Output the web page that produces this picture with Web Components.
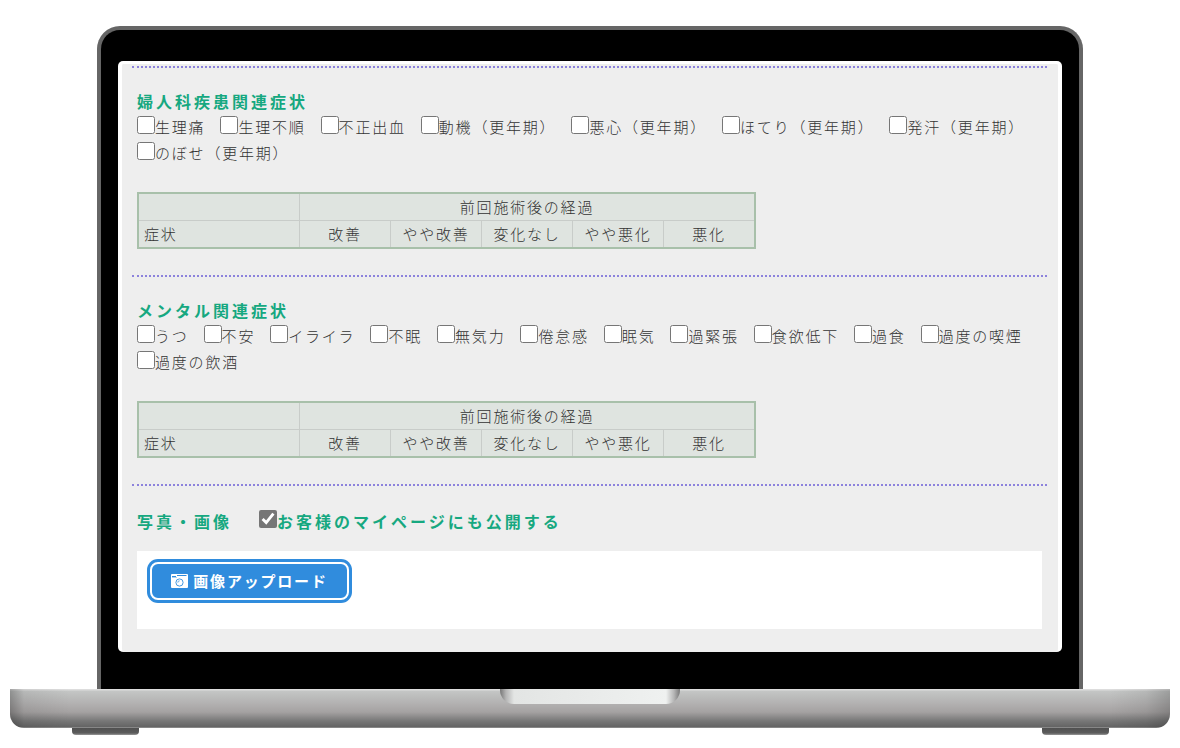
<!DOCTYPE html>
<html lang="ja">
<head>
<meta charset="utf-8">
<title>カルテ入力</title>
<style>
body { margin: 0; background: #fff; color: #333; font: 300 15px/26px "Noto Sans CJK JP", sans-serif; letter-spacing: .12em; }
</style>
</head>
<body>
<laptop-frame>
  <symptom-section heading="婦人科疾患関連症状" items="生理痛,生理不順,不正出血,動機（更年期）,悪心（更年期）,ほてり（更年期）,発汗（更年期）,のぼせ（更年期）"></symptom-section>
  <symptom-section heading="メンタル関連症状" items="うつ,不安,イライラ,不眠,無気力,倦怠感,眠気,過緊張,食欲低下,過食,過度の喫煙,過度の飲酒"></symptom-section>
  <photo-section></photo-section>
</laptop-frame>
<script>
class LaptopFrame extends HTMLElement {
  connectedCallback() {
    this.attachShadow({ mode: 'open' }).innerHTML = `
    <style>
      :host { display: block; padding: 26px 10px 13px; }
      .lid { margin: 0 7.5%; padding: 31px 17px 37px; border: 4px solid #666; border-bottom: 0; border-radius: 23px 23px 0 0; background: #000; }
      .screen { background: #eee; border: 4px solid #fff; border-top-width: 3px; border-bottom: 0; border-radius: 5px; padding: 2px 11px 23px 10px; }
      .base { position: relative; height: 39px; border-radius: 0 0 14px 14px;
        background: linear-gradient(90deg, #0004, #0001 14px, #0000 60px, #0000 calc(100% - 60px), #0001 calc(100% - 24px), #0003),
          linear-gradient(#ddd 0 1px, #c4c6c5 2px, #b3b2b2 14px, #a5a2a2 23px, #777 32px, #646464 38px, #aaa 39px); }
      .notch { width: 180px; height: 15px; margin: 0 auto; border-radius: 0 0 14px 14px;
        background: linear-gradient(90deg, #777, #b5b5b5 6px, #e3e5e4 14px, #eff1f0 calc(100% - 14px), #b5b5b5 calc(100% - 6px), #777); }
      .feet { display: flex; justify-content: space-between; padding: 0 61px 0 62px; }
      .feet i { width: 67px; height: 7px; background: linear-gradient(#505050, #5c5c5c 5px, #999); border-radius: 0 0 4px 4px; }
    </style>
    <div class="lid"><main class="screen"><slot></slot></main></div>
    <div class="base"><div class="notch"></div></div>
    <div class="feet"><i></i><i></i></div>`;
  }
}
class CheckItem extends HTMLElement {
  connectedCallback() {
    this.attachShadow({ mode: 'open' }).innerHTML = `
    <style>
      :host { display: block; }
      label { display: flex; align-items: flex-start; white-space: nowrap; }
      input { width: 18px; height: 18px; margin: 2px 0 0; accent-color: #767676; }
    </style>
    <label><input type="checkbox" ${this.hasAttribute('checked') ? 'checked' : ''}><slot></slot></label>`;
  }
}
class ProgressTable extends HTMLElement {
  connectedCallback() {
    this.attachShadow({ mode: 'open' }).innerHTML = `
    <style>
      :host { display: block; }
      table { table-layout: fixed; width: 619px; border: 2px solid #a8c0aa; border-spacing: 0; background: #dfe4e0; }
      th { box-sizing: border-box; height: 26px; padding: 0; font-weight: inherit; border-right: 1px solid #c8ccc9; }
      thead tr:first-child th { height: 27px; border-bottom: 1px solid #c8ccc9; }
      tr th:last-child { border-right: 0; }
      .name { text-align: left; padding-left: 5px; }
      col { width: 91px; }
      col:first-child { width: 161px; }
      col:last-child { width: 90px; }
    </style>
    <table>
      <colgroup><col><col><col><col><col><col></colgroup>
      <thead>
        <tr><th></th><th colspan="5">前回施術後の経過</th></tr>
        <tr><th class="name">症状</th><th>改善</th><th>やや改善</th><th>変化なし</th><th>やや悪化</th><th>悪化</th></tr>
      </thead>
    </table>`;
  }
}
class SymptomSection extends HTMLElement {
  connectedCallback() {
    const items = this.getAttribute('items').split(',');
    this.attachShadow({ mode: 'open' }).innerHTML = `
    <style>
      :host { display: block; border-top: 2px dotted #8c82dc; padding: 20px 5px 26px; }
      h2 { margin: 0; font-size: 16px; line-height: 26px; font-weight: 700; letter-spacing: 3px; color: #16a880; }
      .items { display: flex; flex-wrap: wrap; column-gap: 15px; margin-bottom: 26px; }
    </style>
    <h2>${this.getAttribute('heading')}</h2>
    <div class="items">${items.map(t => `<check-item>${t}</check-item>`).join('')}</div>
    <progress-table></progress-table>`;
  }
}
class UploadButton extends HTMLElement {
  connectedCallback() {
    this.attachShadow({ mode: 'open' }).innerHTML = `
    <style>
      :host { display: block; }
      button { display: flex; align-items: center; justify-content: center; gap: 5px; width: 199px; height: 38px; padding: 0;
        border: 2px solid #fff; border-radius: 8px; box-shadow: 0 0 0 3px #308cdd; background: #308cdd;
        color: #fff; font: inherit; font-weight: 700; letter-spacing: inherit; }
      svg { display: block; }
    </style>
    <button type="button"><svg width="17" height="14" viewBox="0 0 17 14" aria-hidden="true">
      <rect width="17" height="14" rx="1" fill="#fff"/>
      <path d="M1 2.5H5M6 1.5H15.5" fill="none" stroke="#308cdd"/>
      <path d="M1 3.5H6" fill="none" stroke="#308cdd" stroke-opacity=".4"/>
      <circle cx="8.5" cy="8.5" r="3.6" fill="none" stroke="#308cdd" stroke-width=".9"/>
      <path d="M6.8 8.7A1.8 1.8 0 0 1 8.7 6.8" fill="none" stroke="#308cdd" stroke-width=".7"/>
    </svg><slot></slot></button>`;
  }
}
class PhotoSection extends HTMLElement {
  connectedCallback() {
    this.attachShadow({ mode: 'open' }).innerHTML = `
    <style>
      :host { display: block; border-top: 2px dotted #8c82dc; padding: 22px 5px 0; }
      .head { display: flex; gap: 27px; margin-bottom: 17px; font-size: 16px; font-weight: 700; letter-spacing: 3px; color: #16a880; }
      h2 { margin: 0; font: inherit; }
      .panel { background: #fff; padding: 11px 13px 29px; }
    </style>
    <div class="head"><h2>写真・画像</h2><check-item checked>お客様のマイページにも公開する</check-item></div>
    <div class="panel"><upload-button>画像アップロード</upload-button></div>`;
  }
}
customElements.define('laptop-frame', LaptopFrame);
customElements.define('check-item', CheckItem);
customElements.define('progress-table', ProgressTable);
customElements.define('symptom-section', SymptomSection);
customElements.define('upload-button', UploadButton);
customElements.define('photo-section', PhotoSection);
</script>
</body>
</html>
